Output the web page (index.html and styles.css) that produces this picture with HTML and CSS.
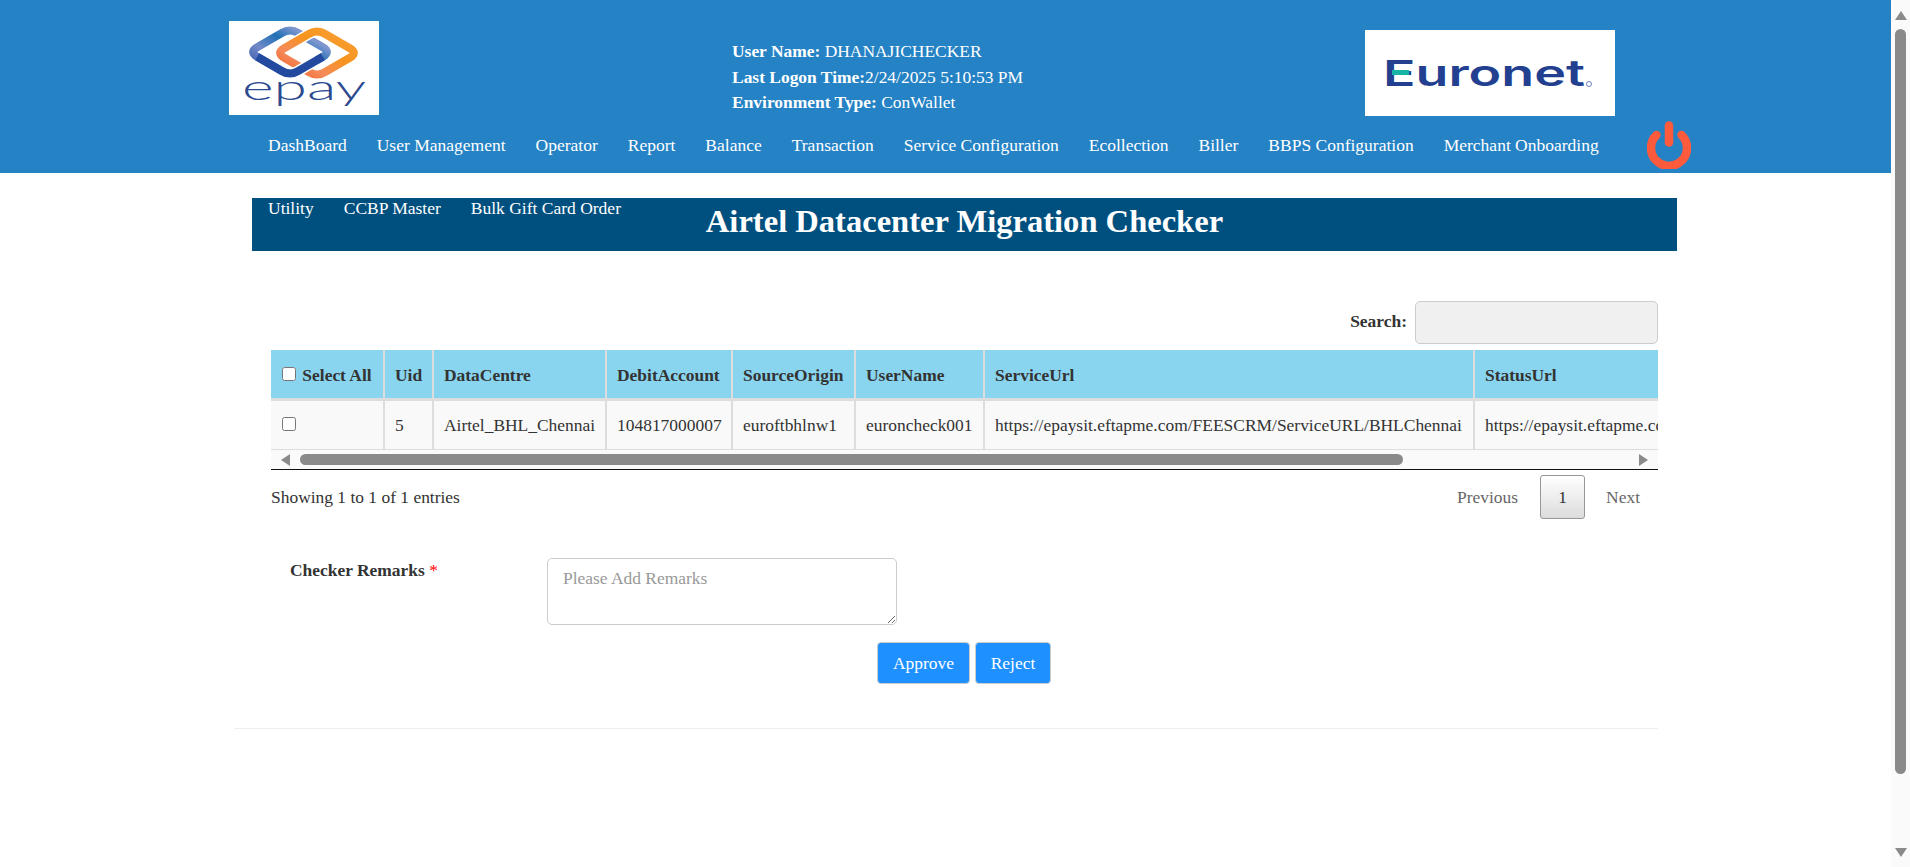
FILE: index.html
```html
<!DOCTYPE html>
<html lang="en">
<head>
    <meta charset="UTF-8">
    <meta name="viewport" content="width=device-width, initial-scale=1.0">
    <title>Airtel Datacenter Migration Checker</title>
    <link rel="stylesheet" href="styles.css">
</head>
<body>
    <div class="app">
        <header class="topbar">
            <div class="brand-row">
                <svg class="logo-epay" viewBox="0 0 150 94" role="img" aria-label="epay logo">
                    <defs>
                        <linearGradient id="blueRing" x1="0" y1="1" x2="1" y2="0">
                            <stop offset="0" stop-color="#2a4ea6"/>
                            <stop offset="0.35" stop-color="#7289c8"/>
                            <stop offset="0.6" stop-color="#1f6fb5"/>
                            <stop offset="0.8" stop-color="#7f97cf"/>
                            <stop offset="1" stop-color="#5f80c0"/>
                        </linearGradient>
                        <linearGradient id="orangeRing" x1="0" y1="1" x2="1" y2="0">
                            <stop offset="0" stop-color="#f0622a"/>
                            <stop offset="0.3" stop-color="#f58a5a"/>
                            <stop offset="0.6" stop-color="#f7941d"/>
                            <stop offset="1" stop-color="#f7a13a"/>
                        </linearGradient>
                    </defs>
                    <path class="ring" stroke="url(#blueRing)" d="M52.8 12 L28.2 26.2 Q20 31 28.2 35.8 L52.8 50 Q61 55 69.2 50 L93.8 35.8 Q102 31 93.8 26.2 L69.2 12 Q61 7 52.8 12 Z"/>
                    <path class="ring-gap" d="M79.8 13 L55.2 27.2 Q47 32 55.2 36.8 L79.8 51 Q88 56 96.2 51 L120.8 36.8 Q129 32 120.8 27.2 L96.2 13 Q88 8 79.8 13 Z"/>
                    <path class="ring" stroke="url(#orangeRing)" d="M79.8 13 L55.2 27.2 Q47 32 55.2 36.8 L79.8 51 Q88 56 96.2 51 L120.8 36.8 Q129 32 120.8 27.2 L96.2 13 Q88 8 79.8 13 Z"/>
                    <path class="ring-gap" d="M58 53 Q61 55 69.2 50 L88 39"/>
                    <path class="ring" stroke="#234a9e" d="M28.2 35.8 L52.8 50 Q61 55 69.2 50 L93.8 35.8"/>
                    <text class="epay-word" x="13" y="79" textLength="124" lengthAdjust="spacingAndGlyphs">epay</text>
                </svg>
                <div class="user-info">
                    <div><b>User Name:</b> DHANAJICHECKER</div>
                    <div><b>Last Logon Time:</b>2/24/2025 5:10:53 PM</div>
                    <div><b>Environment Type:</b> ConWallet</div>
                </div>
                <svg class="logo-euronet" viewBox="0 0 250 86" role="img" aria-label="Euronet logo">
                    <text class="euronet-word" x="18" y="56" textLength="202" lengthAdjust="spacingAndGlyphs">Euronet</text>
                    <rect x="27" y="40" width="17" height="5" fill="#17b5a6"/>
                    <circle cx="224" cy="54" r="2.5" fill="none" stroke="#6d83bd" stroke-width="1"/>
                </svg>
            </div>
            <div class="nav-row">
                <ul class="main-nav">
                    <li>DashBoard</li>
                    <li>User Management</li>
                    <li>Operator</li>
                    <li>Report</li>
                    <li>Balance</li>
                    <li>Transaction</li>
                    <li>Service Configuration</li>
                    <li>Ecollection</li>
                    <li>Biller</li>
                    <li>BBPS Configuration</li>
                    <li>Merchant Onboarding</li>
                    <li>Utility</li>
                    <li>CCBP Master</li>
                    <li>Bulk Gift Card Order</li>
                </ul>
                <svg class="power-icon" viewBox="0 0 44 48" role="img" aria-label="Logout">
                    <path d="M9.5 14 A18 18 0 1 0 34.5 14"/>
                    <path d="M22 4.5 V21.5"/>
                </svg>
            </div>
        </header>

        <main class="page">
            <h1 class="page-title">Airtel Datacenter Migration Checker</h1>

            <section class="panel">
                <div class="search-row">
                    <label class="search-label" for="search">Search:</label>
                    <input class="search-input" type="text" id="search">
                </div>

                <div class="table-scroll">
                    <table class="data-table">
                        <colgroup>
                            <col class="col-select">
                            <col class="col-uid">
                            <col class="col-centre">
                            <col class="col-account">
                            <col class="col-origin">
                            <col class="col-user">
                            <col class="col-url">
                            <col class="col-status">
                        </colgroup>
                        <thead>
                            <tr>
                                <th><input class="select-all" type="checkbox"> Select All</th>
                                <th>Uid</th>
                                <th>DataCentre</th>
                                <th>DebitAccount</th>
                                <th>SourceOrigin</th>
                                <th>UserName</th>
                                <th>ServiceUrl</th>
                                <th>StatusUrl</th>
                            </tr>
                        </thead>
                        <tbody>
                            <tr>
                                <td><input type="checkbox"></td>
                                <td>5</td>
                                <td>Airtel_BHL_Chennai</td>
                                <td>104817000007</td>
                                <td>euroftbhlnw1</td>
                                <td>euroncheck001</td>
                                <td>https://epaysit.eftapme.com/FEESCRM/ServiceURL/BHLChennai</td>
                                <td>https://epaysit.eftapme.com/FEESCRM</td>
                            </tr>
                        </tbody>
                    </table>
                </div>
                <div class="hscroll">
                    <span class="hscroll-btn"><i class="arrow-left"></i></span>
                    <span class="hscroll-thumb"></span>
                    <span class="hscroll-btn hscroll-end"><i class="arrow-right"></i></span>
                </div>

                <div class="table-foot">
                    <div>Showing 1 to 1 of 1 entries</div>
                    <div class="pager">
                        <span class="pager-link">Previous</span>
                        <span class="pager-current">1</span>
                        <span class="pager-link">Next</span>
                    </div>
                </div>

                <div class="remarks-row">
                    <label class="remarks-label" for="remarks">Checker Remarks <span class="required">*</span></label>
                    <textarea class="remarks-input" id="remarks" placeholder="Please Add Remarks"></textarea>
                </div>

                <div class="action-row">
                    <button class="action-btn btn-approve">Approve</button>
                    <button class="action-btn btn-reject">Reject</button>
                </div>
            </section>

            <hr class="page-rule">
        </main>
    </div>

    <div class="vscroll">
        <span class="vscroll-top"><i class="arrow-up"></i></span>
        <span class="vscroll-thumb"></span>
        <span class="vscroll-bottom"><i class="arrow-down"></i></span>
    </div>
</body>
</html>
```

FILE: styles.css
```css
body {
    display: flex;
    height: 867px;
    margin: 0;
    overflow: hidden;
    font-family: "Liberation Serif", "Times New Roman", serif;
    font-size: 17.44px;
    color: #333;
    background-color: #fff;
}
.app {
    width: 1891px;
    flex: none;
}

/* page scrollbar */
.vscroll {
    display: flex;
    flex-direction: column;
    align-items: center;
    width: 19px;
    background-color: #fafafa;
}
.vscroll-top {
    height: 29px;
    padding-top: 11px;
    box-sizing: border-box;
}
.vscroll-thumb {
    width: 11px;
    height: 745px;
    margin-bottom: 74px;
    background-color: #8a8a8a;
    border-radius: 6px;
}
.arrow-up,
.arrow-down,
.arrow-left,
.arrow-right {
    display: block;
    width: 0;
    height: 0;
    border-style: solid;
    border-color: transparent;
}
.arrow-up {
    border-width: 0 6px 9px;
    border-bottom-color: #8a8a8a;
}
.arrow-down {
    border-width: 9px 6px 0;
    border-top-color: #8a8a8a;
}
.arrow-left {
    border-width: 6px 9px 6px 0;
    border-right-color: #8a8a8a;
}
.arrow-right {
    border-width: 6px 0 6px 9px;
    border-left-color: #8a8a8a;
}

/* header */
.topbar {
    height: 173px;
    background-color: #2582c4;
    color: #fff;
}
.brand-row {
    display: flex;
    height: 114px;
    padding-left: 229px;
}
.logo-epay {
    width: 150px;
    height: 94px;
    margin-top: 21px;
    background-color: #fff;
}
.ring {
    fill: none;
    stroke-width: 8;
    stroke-linejoin: round;
    stroke-linecap: butt;
}
.ring-gap {
    fill: none;
    stroke: #fff;
    stroke-width: 11;
}
.epay-word {
    font-family: "Lato", "Liberation Sans", sans-serif;
    font-size: 35px;
    font-weight: 300;
    fill: #2b4a8f;
}
.user-info {
    width: 633px;
    margin-left: 353px;
    margin-top: 39px;
    line-height: 25.5px;
}
.logo-euronet {
    width: 250px;
    height: 86px;
    margin-top: 30px;
    background-color: #fff;
}
.euronet-word {
    font-family: "Inter", "Liberation Sans", sans-serif;
    font-size: 36px;
    font-weight: 600;
    fill: #233f8f;
}

.nav-row {
    display: flex;
    align-items: flex-start;
    padding-left: 253px;
}
.main-nav {
    position: relative;
    z-index: 2;
    display: flex;
    flex-wrap: wrap;
    width: 1394px;
    margin: 0;
    padding: 0;
    list-style: none;
    font-size: 17.5px;
}
.main-nav li {
    height: 63px;
    padding: 0 15px;
    line-height: 63px;
    white-space: nowrap;
}
.power-icon {
    width: 44px;
    height: 48px;
    margin-top: 7px;
    fill: none;
    stroke: #ff5a3c;
    stroke-width: 8.5;
    stroke-linecap: round;
}

/* page */
.page-title {
    width: 1425px;
    height: 53px;
    margin: 25px 0 0 252px;
    background-color: #00507f;
    color: #fff;
    font-size: 32.55px;
    line-height: 46px;
    text-align: center;
}
.panel {
    width: 1387px;
    margin-left: 271px;
}
.search-row {
    display: flex;
    justify-content: flex-end;
    align-items: flex-start;
    gap: 8px;
    margin-top: 50px;
}
.search-label {
    margin-top: 10px;
    font-weight: bold;
}
.search-input {
    width: 243px;
    height: 43px;
    box-sizing: border-box;
    background-color: #f0f0f0;
    border: 1px solid #ccc;
    border-radius: 5px;
}

.table-scroll {
    margin-top: 6px;
    overflow: hidden;
}
.data-table {
    table-layout: fixed;
    width: 1671px;
    border-collapse: separate;
    border-spacing: 0;
}
.col-select { width: 114px; }
.col-uid { width: 49px; }
.col-centre { width: 173px; }
.col-account { width: 126px; }
.col-origin { width: 123px; }
.col-user { width: 129px; }
.col-url { width: 490px; }
.col-status { width: 467px; }

.data-table th,
.data-table td {
    box-sizing: border-box;
    padding: 0 0 0 10px;
    border-right: 2px solid #ddd;
    text-align: left;
    white-space: nowrap;
    overflow: hidden;
}
.data-table th {
    height: 51px;
    padding-top: 2px;
    background-color: #89d5f0;
    border-bottom: 3px solid #ddd;
}
.data-table td {
    height: 49px;
    background-color: #f9f9f9;
    border-bottom: 1px solid #ddd;
}
.data-table input {
    width: 14px;
    height: 14px;
    margin: 0 1px 0 1px;
}
.data-table .select-all {
    margin-right: 2px;
}

.hscroll {
    display: flex;
    align-items: center;
    height: 19px;
    background-color: #fafafa;
    border-bottom: 1px solid #111;
}
.hscroll-btn {
    display: flex;
    align-items: center;
    justify-content: center;
    width: 29px;
    height: 19px;
    flex: none;
}
.hscroll-end {
    margin-left: auto;
}
.hscroll-thumb {
    width: 1103px;
    height: 11px;
    background-color: #8a8a8a;
    border-radius: 6px;
}

.table-foot {
    display: flex;
    justify-content: space-between;
    align-items: center;
    margin-top: 5px;
}
.pager {
    display: flex;
    align-items: center;
    padding-right: 18px;
}
.pager-link {
    color: #666;
}
.pager-current {
    width: 45px;
    height: 44px;
    box-sizing: border-box;
    margin: 0 21px 0 22px;
    border: 1px solid #979797;
    border-radius: 3px;
    background: linear-gradient(to bottom, #fff, #dcdcdc);
    line-height: 42px;
    text-align: center;
}

.remarks-row {
    display: flex;
    align-items: flex-start;
    margin-top: 39px;
    padding-left: 19px;
}
.remarks-label {
    width: 257px;
    margin-top: 2px;
    font-weight: bold;
}
.required {
    color: #f00;
    font-weight: normal;
}
.remarks-input {
    width: 350px;
    height: 67px;
    box-sizing: border-box;
    padding: 9px 15px;
    border: 1px solid #ccc;
    border-radius: 5px;
    font-family: inherit;
    font-size: 17.44px;
}
.remarks-input::placeholder {
    color: #999;
}

.action-row {
    display: flex;
    gap: 5px;
    margin-top: 17px;
    padding-left: 606px;
}
.action-btn {
    height: 42px;
    box-sizing: border-box;
    border: 1px solid #ccc;
    border-radius: 4px;
    background-color: #1e90ff;
    color: #fff;
    font-family: inherit;
    font-size: 17.44px;
}
.btn-approve { width: 93px; }
.btn-reject { width: 76px; }

.page-rule {
    width: 1424px;
    height: 1px;
    margin: 44px 0 0 234px;
    border: 0;
    background-color: #eee;
}
```
